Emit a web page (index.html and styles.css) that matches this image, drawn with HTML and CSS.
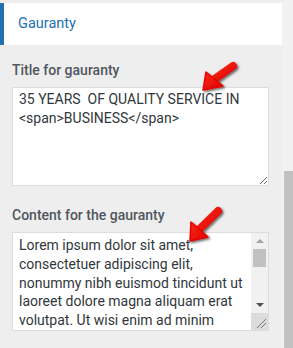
FILE: index.html
```html
<!DOCTYPE html>
<html lang="en">
<head>
	<meta charset="UTF-8">
	<title>Customizer - Gauranty</title>
	<link rel="stylesheet" href="styles.css">
</head>
<body>
	<div class="screen">
		<div class="panel">
			<div class="section-head">Gauranty</div>

			<div class="control">
				<label class="control-title" for="gauranty-title">Title for gauranty</label>
				<div class="field">
					<textarea id="gauranty-title" class="text-box" readonly>35 YEARS  OF QUALITY SERVICE IN &lt;span&gt;BUSINESS&lt;/span&gt;</textarea>
					<svg class="pointer pointer-1" width="46" height="38" viewBox="0 0 46 38">
						<defs>
							<linearGradient id="red" x1="0" y1="0" x2="1" y2="1">
								<stop offset="0" stop-color="#ff2a1a"/>
								<stop offset="1" stop-color="#d80000"/>
							</linearGradient>
							<filter id="shade" x="-30%" y="-30%" width="160%" height="160%">
								<feDropShadow dx="1.5" dy="1.5" stdDeviation="1.3" flood-color="#000" flood-opacity=".6"/>
							</filter>
						</defs>
						<g filter="url(#shade)">
							<path d="M18.5 20 L37 7" stroke="url(#red)" stroke-width="8" stroke-linecap="round"/>
							<path d="M7 31 L10 13 L27 27 Z" fill="url(#red)" stroke="#e80000" stroke-width="1.5" stroke-linejoin="round"/>
						</g>
					</svg>
				</div>
			</div>

			<div class="control">
				<label class="control-title" for="gauranty-content">Content for the gauranty</label>
				<div class="field">
					<textarea id="gauranty-content" class="text-box with-scroll" readonly>Lorem ipsum dolor sit amet, consectetuer adipiscing elit, nonummy nibh euismod tincidunt ut laoreet dolore magna aliquam erat volutpat. Ut wisi enim ad minim veniam, quis nostrud exerci tation ullamcorper suscipit lobortis nisl ut aliquip ex ea commodo consequat.</textarea>
					<div class="box-scroll">
						<div class="box-scroll-btn"><span class="tri tri-up"></span></div>
						<div class="box-scroll-track"><div class="box-scroll-thumb"></div></div>
						<div class="box-scroll-btn"><span class="tri tri-down"></span></div>
						<div class="box-scroll-corner">
							<svg width="17" height="17" viewBox="0 0 17 17"><path d="M6 15 L15 6 M10 15 L15 10" stroke="#777" stroke-width="1"/></svg>
						</div>
					</div>
					<svg class="pointer pointer-2" width="46" height="42" viewBox="0 0 46 42">
						<g filter="url(#shade)">
							<path d="M15.5 26 L35 7" stroke="url(#red)" stroke-width="8" stroke-linecap="round"/>
							<path d="M7 37 L8 18 L25 33 Z" fill="url(#red)" stroke="#e80000" stroke-width="1.5" stroke-linejoin="round"/>
						</g>
					</svg>
				</div>
			</div>
		</div>
		<div class="page-scroll"><div class="page-thumb"></div></div>
	</div>
</body>
</html>
```

FILE: styles.css
```css
*{margin: 0; padding: 0; box-sizing: border-box;}
html, body{width: 100%; height: 100%; overflow: hidden; background: #eee;}
body{font-family: Roboto, "Liberation Sans", sans-serif; font-size: 14px; color: #2c3338;}

.screen{display: flex; height: 348px; overflow: hidden;}
.panel{flex: 1; background: #eee; padding-top: 3px;}
.page-scroll{width: 11px; background: #f1f1f1; padding: 171px 0 0 2px;}
.page-thumb{height: 300px; background: #c1c1c1;}

.section-head{height: 42px; line-height: 42px; padding-left: 14px; background: #fff; border-left: 4px solid #2271b1; color: #2271b1; font-size: 14.5px;}

.control{padding: 15px 13px 0 12px;}
.control + .control{padding-top: 19px;}
.control-title{display: block; line-height: 20px; margin-bottom: 7px; font-weight: 500; color: #50575e;}

.field{position: relative;}
.text-box{display: block; width: 100%; height: 99px; padding: 2px 6px; border: 1px solid #ddd; background: #fff; color: #32373c;
	font-family: Roboto, "Liberation Sans", sans-serif; font-size: 14px; line-height: 18.8px; overflow: hidden; resize: vertical; outline: none;}
.text-box.with-scroll{padding-top: 3px; padding-right: 18px; resize: none;}

.box-scroll{position: absolute; top: 1px; right: 1px; bottom: 1px; width: 17px; display: flex; flex-direction: column; background: #f1f1f1;}
.box-scroll-btn{height: 16px; display: flex; align-items: center; justify-content: center;}
.box-scroll-track{flex: 1; padding: 0 2px;}
.box-scroll-thumb{height: 18px; background: #c1c1c1;}
.box-scroll-corner{height: 17px; background: #dcdcdc;}
.box-scroll-corner svg{display: block;}
.tri{width: 0; height: 0; border-left: 4px solid transparent; border-right: 4px solid transparent;}
.tri-up{border-bottom: 4px solid #a3a3a3;}
.tri-down{border-top: 4px solid #505050;}

.pointer{position: absolute; overflow: visible;}
.pointer-1{left: 184px; top: -28px;}
.pointer-2{left: 171px; top: -28px;}
```
